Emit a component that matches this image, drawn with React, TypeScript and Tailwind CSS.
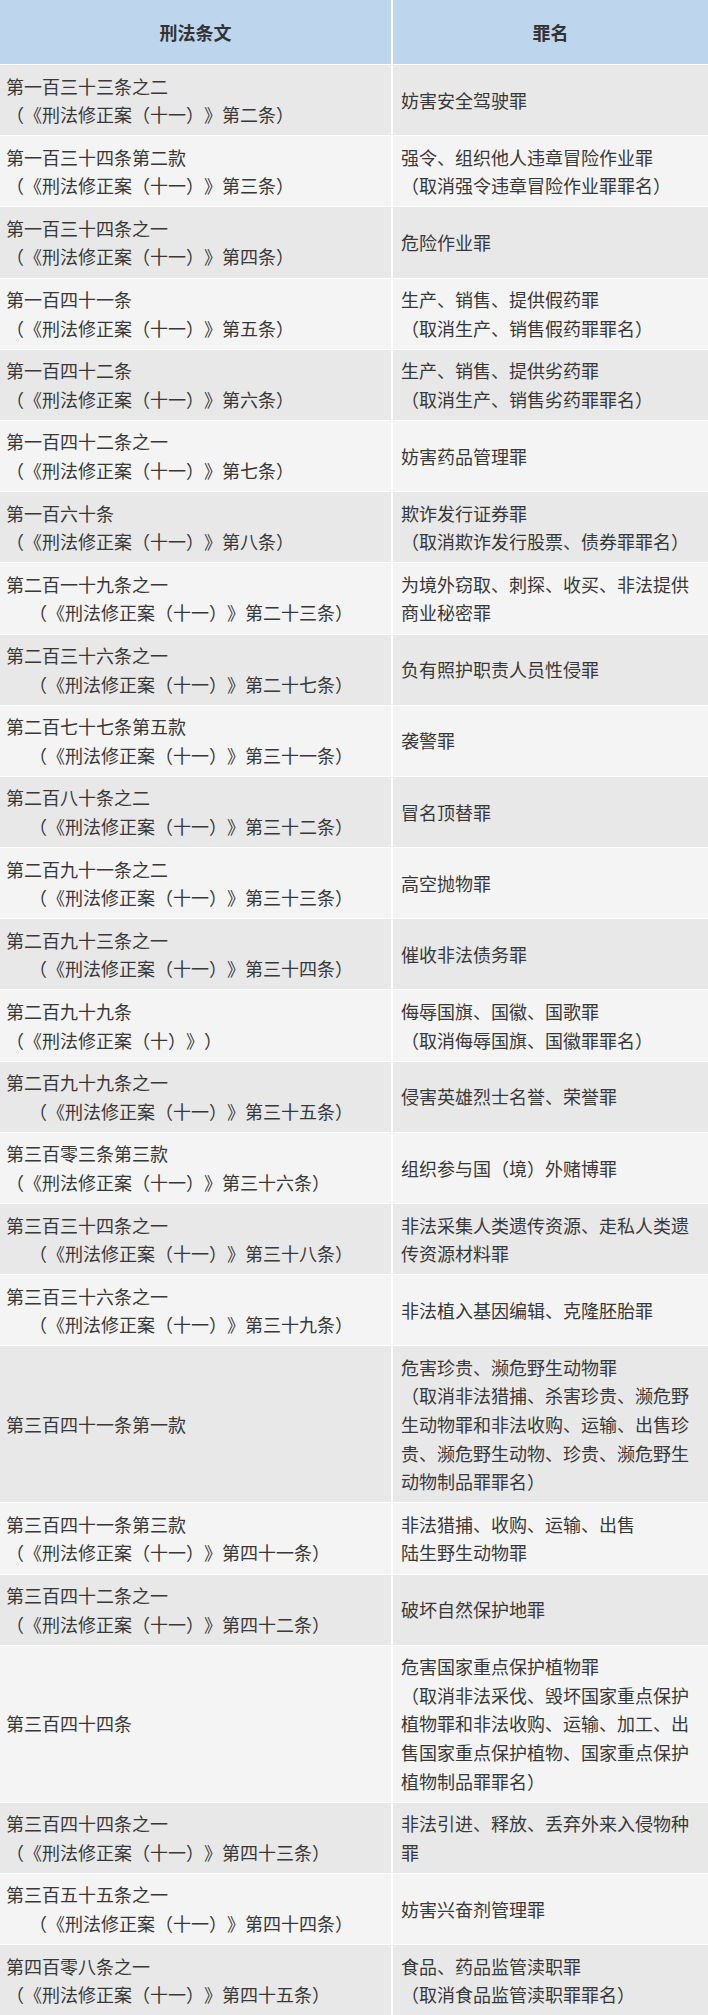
type Row = {
  left: string[]
  indent?: boolean
  right: string[]
}

const rows: Row[] = [
  { left: ['第一百三十三条之二', '（《刑法修正案（十一）》第二条）'], right: ['妨害安全驾驶罪'] },
  {
    left: ['第一百三十四条第二款', '（《刑法修正案（十一）》第三条）'],
    right: ['强令、组织他人违章冒险作业罪', '（取消强令违章冒险作业罪罪名）'],
  },
  { left: ['第一百三十四条之一', '（《刑法修正案（十一）》第四条）'], right: ['危险作业罪'] },
  {
    left: ['第一百四十一条', '（《刑法修正案（十一）》第五条）'],
    right: ['生产、销售、提供假药罪', '（取消生产、销售假药罪罪名）'],
  },
  {
    left: ['第一百四十二条', '（《刑法修正案（十一）》第六条）'],
    right: ['生产、销售、提供劣药罪', '（取消生产、销售劣药罪罪名）'],
  },
  { left: ['第一百四十二条之一', '（《刑法修正案（十一）》第七条）'], right: ['妨害药品管理罪'] },
  {
    left: ['第一百六十条', '（《刑法修正案（十一）》第八条）'],
    right: ['欺诈发行证券罪', '（取消欺诈发行股票、债券罪罪名）'],
  },
  {
    left: ['第二百一十九条之一', '（《刑法修正案（十一）》第二十三条）'],
    indent: true,
    right: ['为境外窃取、刺探、收买、非法提供', '商业秘密罪'],
  },
  {
    left: ['第二百三十六条之一', '（《刑法修正案（十一）》第二十七条）'],
    indent: true,
    right: ['负有照护职责人员性侵罪'],
  },
  { left: ['第二百七十七条第五款', '（《刑法修正案（十一）》第三十一条）'], indent: true, right: ['袭警罪'] },
  { left: ['第二百八十条之二', '（《刑法修正案（十一）》第三十二条）'], indent: true, right: ['冒名顶替罪'] },
  { left: ['第二百九十一条之二', '（《刑法修正案（十一）》第三十三条）'], indent: true, right: ['高空抛物罪'] },
  { left: ['第二百九十三条之一', '（《刑法修正案（十一）》第三十四条）'], indent: true, right: ['催收非法债务罪'] },
  {
    left: ['第二百九十九条', '（《刑法修正案（十）》）'],
    right: ['侮辱国旗、国徽、国歌罪', '（取消侮辱国旗、国徽罪罪名）'],
  },
  {
    left: ['第二百九十九条之一', '（《刑法修正案（十一）》第三十五条）'],
    indent: true,
    right: ['侵害英雄烈士名誉、荣誉罪'],
  },
  { left: ['第三百零三条第三款', '（《刑法修正案（十一）》第三十六条）'], right: ['组织参与国（境）外赌博罪'] },
  {
    left: ['第三百三十四条之一', '（《刑法修正案（十一）》第三十八条）'],
    indent: true,
    right: ['非法采集人类遗传资源、走私人类遗', '传资源材料罪'],
  },
  {
    left: ['第三百三十六条之一', '（《刑法修正案（十一）》第三十九条）'],
    indent: true,
    right: ['非法植入基因编辑、克隆胚胎罪'],
  },
  {
    left: ['第三百四十一条第一款'],
    right: [
      '危害珍贵、濒危野生动物罪',
      '（取消非法猎捕、杀害珍贵、濒危野',
      '生动物罪和非法收购、运输、出售珍',
      '贵、濒危野生动物、珍贵、濒危野生',
      '动物制品罪罪名）',
    ],
  },
  {
    left: ['第三百四十一条第三款', '（《刑法修正案（十一）》第四十一条）'],
    right: ['非法猎捕、收购、运输、出售', '陆生野生动物罪'],
  },
  { left: ['第三百四十二条之一', '（《刑法修正案（十一）》第四十二条）'], right: ['破坏自然保护地罪'] },
  {
    left: ['第三百四十四条'],
    right: [
      '危害国家重点保护植物罪',
      '（取消非法采伐、毁坏国家重点保护',
      '植物罪和非法收购、运输、加工、出',
      '售国家重点保护植物、国家重点保护',
      '植物制品罪罪名）',
    ],
  },
  {
    left: ['第三百四十四条之一', '（《刑法修正案（十一）》第四十三条）'],
    right: ['非法引进、释放、丢弃外来入侵物种', '罪'],
  },
  {
    left: ['第三百五十五条之一', '（《刑法修正案（十一）》第四十四条）'],
    indent: true,
    right: ['妨害兴奋剂管理罪'],
  },
  {
    left: ['第四百零八条之一', '（《刑法修正案（十一）》第四十五条）'],
    right: ['食品、药品监管渎职罪', '（取消食品监管渎职罪罪名）'],
  },
]

export default function App() {
  return (
    <div className="w-[708px] bg-white flex flex-col gap-[1px] font-['Noto_Sans_CJK_SC','Noto_Sans',sans-serif] text-[18px] leading-[28.6px] text-[#383838] [text-spacing-trim:space-all]">
      {/* header */}
      <div className="flex gap-[2px] h-[64px]">
        <div className="w-[391px] bg-[#bdd6ed] flex items-center justify-center font-bold text-[#333]">刑法条文</div>
        <div className="flex-1 bg-[#bdd6ed] flex items-center justify-center font-bold text-[#333]">罪名</div>
      </div>

      {rows.map((row, i) => {
        const bg = i % 2 === 0 ? 'bg-[#e8e8e8]' : 'bg-[#f4f4f4]'
        return (
          <div key={i} className="flex gap-[2px]">
            <div className={`w-[391px] ${bg} flex flex-col justify-center pl-[6px] py-[6.5px] whitespace-nowrap`}>
              {row.left.map((t, j) => (
                <div key={j} className={j === 1 && row.indent ? 'pl-[23px]' : ''}>
                  {t}
                </div>
              ))}
            </div>
            <div className={`flex-1 ${bg} flex flex-col justify-center pl-[8px] py-[6.5px] whitespace-nowrap`}>
              {row.right.map((t, j) => (
                <div key={j}>{t}</div>
              ))}
            </div>
          </div>
        )
      })}
    </div>
  )
}
